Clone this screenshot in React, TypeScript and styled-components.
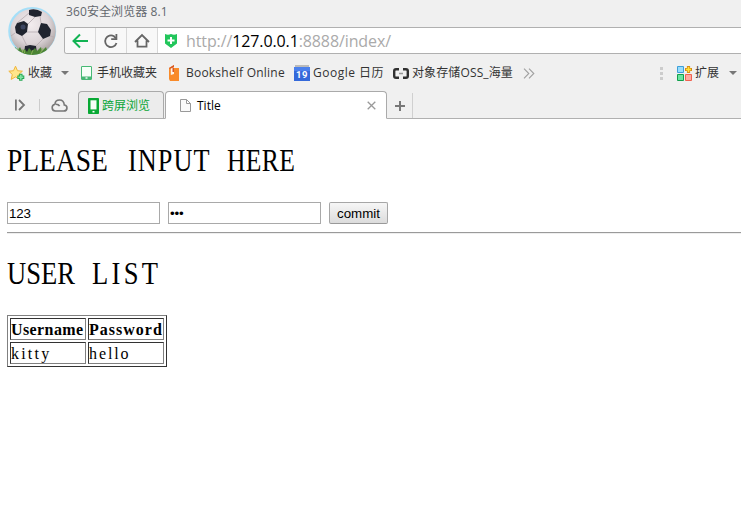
import React from "react";
import styled, { createGlobalStyle } from "styled-components";

const Global = createGlobalStyle`
  * { box-sizing: border-box; }
  html, body, #root { height: 100%; }
  body { margin: 0; background: #fff; overflow: hidden; }
`;

const ui = `"Open Sans", "Noto Sans CJK SC", sans-serif`;

const Window = styled.div`
  width: 741px;
  height: 520px;
  overflow: hidden;
  background: #fff;
`;

const Chrome = styled.header`
  height: 119px;
  background: #f0f0f0;
  font: 12px/16px ${ui};
  color: #333;
  display: flex;
  flex-direction: column;
`;

const TopArea = styled.div`
  display: flex;
  height: 57px;
  padding-left: 7px;
`;

const AvatarBox = styled.div`
  width: 57px;
  padding-top: 6px;
  flex: none;
`;

const TopColumn = styled.div`
  flex: 1;
  min-width: 0;
`;

const AppTitle = styled.div`
  height: 27px;
  padding: 4px 0 0 2px;
  color: #63676d;
  letter-spacing: 0.1px;
  white-space: pre;
`;

const AddressBar = styled.div`
  display: flex;
  height: 27px;
  border: 1px solid #b0b0b0;
  border-right: 0;
  border-radius: 3px 0 0 3px;
  background: #fff;
  overflow: hidden;
`;

const NavButton = styled.div`
  width: 31px;
  background: #f8f8f8;
  border-right: 1px solid #d8d8d8;
  display: flex;
  align-items: center;
  justify-content: center;
`;

const Url = styled.div`
  display: flex;
  align-items: center;
  padding-left: 7px;
  color: #aaa;
  font: 16px/24px "Open Sans", sans-serif;
  letter-spacing: -0.11px;
  white-space: pre;
  svg { margin-right: 9px; }
  b { font-weight: 400; color: #000; }
`;

const Bookmarks = styled.nav`
  display: flex;
  align-items: center;
  height: 32px;
  padding-left: 8px;
`;

const Bookmark = styled.div<{ $w: number; $gap: number; $ls?: number }>`
  display: flex;
  align-items: center;
  gap: ${(p) => p.$gap}px;
  width: ${(p) => p.$w}px;
  flex: none;
  white-space: pre;
  letter-spacing: ${(p) => p.$ls ?? 0}px;
  svg { flex: none; }
`;

const Spacer = styled.div`
  flex: 1;
`;

const TabStrip = styled.div`
  display: flex;
  height: 30px;
  align-items: flex-end;
  background: linear-gradient(#b0b0b0, #b0b0b0) bottom / 100% 1px no-repeat;
`;

const StripTools = styled.div`
  width: 78px;
  height: 28px;
  display: flex;
  align-items: center;
  padding-left: 14px;
`;

const Divider = styled.i`
  width: 1px;
  height: 12px;
  background: #ccc;
  margin: 0 11px 0 13px;
`;

const Tab = styled.div<{ $active?: boolean }>`
  width: ${(p) => (p.$active ? 222 : 86)}px;
  height: 28px;
  margin-right: ${(p) => (p.$active ? 0 : 1)}px;
  padding: 1px ${(p) => (p.$active ? 10 : 8)}px 0 ${(p) => (p.$active ? 14 : 9)}px;
  display: flex;
  align-items: center;
  gap: ${(p) => (p.$active ? 6 : 3)}px;
  border: 1px solid #aaa;
  border-bottom-color: ${(p) => (p.$active ? "#fff" : "#b0b0b0")};
  border-radius: 4px 4px 0 0;
  background: ${(p) => (p.$active ? "#fff" : "#ececec")};
  color: ${(p) => (p.$active ? "#000" : "#0aa637")};
  white-space: nowrap;
  svg { flex: none; }
`;

const NewTab = styled.div`
  width: 26px;
  height: 25px;
  margin-bottom: 1px;
  display: flex;
  align-items: center;
  justify-content: center;
  border-right: 1px solid #d0d0d0;
`;

const Page = styled.main`
  padding: 0 0 0 7px;
  font: 16px/20px "Liberation Serif", serif;
  color: #000;
`;

const Heading = styled.h1<{ $top: number }>`
  margin: 0;
  padding-top: ${(p) => p.$top}px;
  height: ${(p) => p.$top + 38}px;
  display: flex;
  font: 400 32px/38px "Liberation Serif", serif;
  white-space: pre;
`;

const Word = styled.span<{ $w: number; $scale: number; $space?: number }>`
  display: block;
  width: ${(p) => p.$w}px;
  transform: scaleX(${(p) => p.$scale});
  transform-origin: 0 0;
  letter-spacing: ${(p) => p.$space ?? 0}px;
`;

const Form = styled.form`
  display: flex;
  height: 30px;
  margin-top: 23px;
`;

const Field = styled.input`
  width: 153px;
  height: 22px;
  margin-right: 8px;
  padding: 1px 0 0 1px;
  border: 1px solid #a9a9a9;
  border-radius: 0;
  outline: 0;
  background: #fff;
  color: #000;
  font: 13.33px "Liberation Sans", sans-serif;
  letter-spacing: -0.2px;
`;

const Commit = styled.button`
  width: 59px;
  height: 22px;
  padding: 1px 0 0;
  border: 1px solid #a6a6a6;
  border-bottom-color: #999;
  border-radius: 2px;
  background: linear-gradient(#f6f6f6, #dcdcdc);
  color: #000;
  font: 13.33px "Liberation Sans", sans-serif;
`;

const Rule = styled.hr`
  margin: 0;
  height: 2px;
  border: 0;
  border-top: 1px solid #9a9a9a;
  border-bottom: 1px solid #eee;
`;

const Table = styled.table`
  width: 160px;
  margin-top: 23px;
  border: 1px solid;
  border-color: #808080 #333 #333 #808080;
  border-collapse: separate;
  border-spacing: 2px;
  table-layout: fixed;
`;

const Cell = styled.td<{ $space: number }>`
  width: 76px;
  height: 22px;
  padding: 1px 0 0;
  border: 1px solid;
  border-color: #333 #808080 #808080 #333;
  text-align: left;
  line-height: 19px;
  letter-spacing: ${(p) => p.$space}px;
  white-space: nowrap;
`;

const Ball = () => (
  <svg width="50" height="50" viewBox="0 0 50 50">
    <defs>
      <radialGradient id="ball" cx="45%" cy="35%" r="62%">
        <stop offset="0" stopColor="#f2ecee" />
        <stop offset=".65" stopColor="#ddd5d8" />
        <stop offset="1" stopColor="#b0a8a8" />
      </radialGradient>
      <clipPath id="round"><circle cx="25.2" cy="25" r="24" /></clipPath>
    </defs>
    <g clipPath="url(#round)">
      <rect width="50" height="50" fill="#a5dff8" />
      <circle cx="26" cy="25.6" r="22.8" fill="url(#ball)" />
      <g fill="#20242f">
        <path d="M10 17l7-2 4 3-1 8-5 4-6-3-1-6z" />
        <path d="M34 17l6 1 4 6-1 6-7 3-5-7z" />
        <path d="M22 4q7-2 13 2l-1 4-6 1-6-2z" />
        <path d="M18 40l5-1 6 1 1 8H17z" />
      </g>
      <circle cx="16" cy="21" r="2.5" fill="#505c82" opacity=".6" />
      <path d="M21 18l7-7M20 26l11 0M15 30l5 10M8 27l-4 3M34 17l-1-7M36 33l-7 7M43 30l4 1M10 17l12-10" fill="none" stroke="#b4a9ae" strokeWidth=".8" />
      <path d="M4 42l3 2 1-3 3 3 2-3 2 4 3-2 2 3 2-4 3 3 3-3 2 3 4-4 1 4 4-4 1 3 4-3v12H4z" fill="#4b8434" />
      <path d="M9 47l2-5m4 6l1-5m8 6l2-5m7 4l3-6m-18 7l-1-5" stroke="#8fb45c" strokeWidth=".9" />
    </g>
  </svg>
);

const Back = () => (
  <svg width="16" height="16" viewBox="0 0 16 16" fill="none" stroke="#12b354" strokeWidth="2">
    <path d="M1.5 8H16M8 1.5L1.5 8 8 14.5" />
  </svg>
);

const Reload = () => (
  <svg width="16" height="16" viewBox="0 0 16 16" fill="none" stroke="#666" strokeWidth="1.8">
    <path d="M13.5 10A5.8 5.8 0 1 1 11 3.3L13 5.5" />
    <path d="M13.4 1v5.2H8.2" />
  </svg>
);

const Home = () => (
  <svg width="16" height="16" viewBox="0 0 16 16" fill="none" stroke="#666" strokeWidth="1.8">
    <path d="M1 9l7-7 7 7M3.5 7.5v6.2h9V7.5" />
  </svg>
);

const Shield = () => (
  <svg width="12" height="14" viewBox="0 0 12 14">
    <path d="M0 0q3 1.5 6 0 3 1.5 6 0v9.5L6 14 0 9.5z" fill="#22c65b" />
    <path d="M6 3v7M2.5 6.5h7" stroke="#fff" strokeWidth="2" />
  </svg>
);

const Star = () => (
  <svg width="17" height="17" viewBox="0 0 17 17">
    <path d="M7.5 1.2l2 4.5 4.9.5-3.7 3.3 1.1 4.9-4.3-2.5-4.3 2.5 1.1-4.9L.8 6.2l4.7-.5z" fill="#ffe68b" stroke="#f0b63c" strokeLinejoin="round" />
    <path d="M12.8 8.7v7M9.3 12.2h7" stroke="#24a852" strokeWidth="3.4" />
    <path d="M12.8 9.7v5M10.3 12.2h5" stroke="#83e3a5" strokeWidth="1.6" />
  </svg>
);

const Phone = ({ bold = false }: { bold?: boolean }) => (
  <svg width="11" height={bold ? 16 : 14} viewBox="0 0 11 14" preserveAspectRatio="none">
    <rect x=".5" y=".5" width="10" height="13" rx=".4" fill={bold ? "#08a934" : "#47b975"} stroke={bold ? "#08a934" : "#47b975"} />
    <path d={bold ? "M2.5 2h6v8h-6z" : "M1 1h9v9.5H1z"} fill="#f6fff8" />
    <path d="M4.5 12h2" stroke="#fff" strokeWidth="1.4" />
  </svg>
);

const Book = () => (
  <svg width="11" height="16" viewBox="0 0 11 16">
    <path d="M0 3l5-3v3h5v13H1L0 14z" fill="#f98b2a" />
    <path d="M0 3l5-3v2L1 4z" fill="#d85828" />
    <path d="M1.8 3.6L5 2.4V9L1.8 10z" fill="#fff3e6" />
    <path d="M3.5 3h1.5v4H3.5z" fill="#d85828" />
  </svg>
);

const Calendar = () => (
  <svg width="16" height="16" viewBox="0 0 16 16">
    <path d="M1 0h14v4H1z" fill="#bbb" />
    <path d="M0 2h16v14H0z" fill="#3469da" />
    <path d="M0 2h16v4H0z" fill="#4b80ec" />
    <text x="8" y="12.6" textAnchor="middle" fontFamily="Roboto, sans-serif" fontWeight="700" fontSize="9.5" fill="#fff">19</text>
  </svg>
);

const CloudBracket = () => (
  <svg width="16" height="11" viewBox="0 0 16 11" fill="none">
    <path d="M6 1.3H3Q1.2 1.3 1.2 3v5Q1.2 9.7 3 9.7h3M10 1.3h3q1.8 0 1.8 1.7v5q0 1.7-1.8 1.7h-3" stroke="#303030" strokeWidth="2.4" />
    <path d="M6 5.5h4" stroke="#999" strokeWidth="1.5" />
  </svg>
);

const Caret = () => (
  <svg width="8" height="4" viewBox="0 0 8 4"><path d="M0 0h8L4 4z" fill="#777" /></svg>
);

const More = () => (
  <svg width="12" height="11" viewBox="0 0 12 11" fill="none" stroke="#a0a0a0" strokeWidth="1.1">
    <path d="M1 .7l4.8 4.8L1 10.3M6 .7l4.8 4.8L6 10.3" />
  </svg>
);

const Dots = () => (
  <svg width="3" height="13" viewBox="0 0 3 13" fill="#ccc">
    <path d="M0 0h3v3H0zM0 5h3v3H0zM0 10h3v3H0z" />
  </svg>
);

const Extensions = () => (
  <svg width="15" height="15" viewBox="0 0 15 15">
    <path d="M.5.5h6v6h-6z" fill="#98dcfb" stroke="#3d9fd8" />
    <path d="M.5 8.5h6v6h-6z" fill="#6be3a0" stroke="#119f4c" />
    <path d="M8.5 8.5h6v6h-6z" fill="#ffaaa0" stroke="#ef6250" />
    <path d="M11.5 0v7M8 3.5h7" stroke="#d88c16" strokeWidth="3.2" />
    <path d="M11.5 1v5M9 3.5h5" stroke="#ffe438" strokeWidth="1.5" />
  </svg>
);

const Sidebar = () => (
  <svg width="12" height="12" viewBox="0 0 12 12" fill="none" stroke="#777" strokeWidth="1.8">
    <path d="M1.9 .5v11M5 1l5 5-5 5" />
  </svg>
);

const Cloud = () => (
  <svg width="17" height="13" viewBox="0 0 17 13" fill="none" stroke="#777" strokeWidth="1.6">
    <path d="M4.5 12h8.2c4.3 0 4.2-5.7.6-6C13 2.6 10.8 1 8.5 1 6 1 4.1 2.8 4 5.2 0 6 .3 12 4.5 12zM5 5.2c2 0 3 .8 3.6 2" />
  </svg>
);

const Doc = () => (
  <svg width="11" height="13" viewBox="0 0 11 13" fill="#fafafa" stroke="#999">
    <path d="M.5.5h6l4 4v8H.5zM6.5.5v4h4" />
  </svg>
);

const Close = () => (
  <svg width="9" height="9" viewBox="0 0 9 9" stroke="#999" strokeWidth="1.3"><path d="M.7.7l7.6 7.6M8.3.7L.7 8.3" /></svg>
);

const Plus = () => (
  <svg width="10" height="10" viewBox="0 0 10 10" stroke="#777" strokeWidth="2"><path d="M5 0v10M0 5h10" /></svg>
);

export default function App() {
  return (
    <Window>
      <Global />
      <Chrome>
        <TopArea>
          <AvatarBox><Ball /></AvatarBox>
          <TopColumn>
            <AppTitle>360安全浏览器 8.1</AppTitle>
            <AddressBar>
              <NavButton><Back /></NavButton>
              <NavButton><Reload /></NavButton>
              <NavButton><Home /></NavButton>
              <Url><Shield /><span>http://<b>127.0.0.1</b>:8888/index/</span></Url>
            </AddressBar>
          </TopColumn>
        </TopArea>
        <Bookmarks>
          <Bookmark $w={53} $gap={3}><Star />收藏</Bookmark>
          <Bookmark $w={20} $gap={0}><Caret /></Bookmark>
          <Bookmark $w={88} $gap={5}><Phone />手机收藏夹</Bookmark>
          <Bookmark $w={125} $gap={6} $ls={0.22}><Book />Bookshelf Online</Bookmark>
          <Bookmark $w={99} $gap={3} $ls={0.5}><Calendar />Google 日历</Bookmark>
          <Bookmark $w={130} $gap={3} $ls={0.12}><CloudBracket />对象存储OSS_海量</Bookmark>
          <More />
          <Spacer />
          <Bookmark $w={17} $gap={0}><Dots /></Bookmark>
          <Bookmark $w={52} $gap={3}><Extensions />扩展</Bookmark>
          <Bookmark $w={12} $gap={0}><Caret /></Bookmark>
        </Bookmarks>
        <TabStrip>
          <StripTools><Sidebar /><Divider /><Cloud /></StripTools>
          <Tab><Phone bold />跨屏浏览</Tab>
          <Tab $active><Doc />Title<Spacer /><Close /></Tab>
          <NewTab><Plus /></NewTab>
        </TabStrip>
      </Chrome>
      <Page>
        <Heading $top={22}>
          <Word $w={121} $scale={0.86}>PLEASE</Word>
          <Word $w={99} $scale={0.82} $space={1.3}>INPUT</Word>
          <Word $w={68} $scale={0.8} $space={0.4}>HERE</Word>
        </Heading>
        <Form>
          <Field type="text" defaultValue="123" />
          <Field type="password" defaultValue="123" />
          <Commit type="button">commit</Commit>
        </Form>
        <Rule />
        <Heading $top={20}>
          <Word $w={85} $scale={0.83}>USER</Word>
          <Word $w={68} $scale={0.83} $space={4}>LIST</Word>
        </Heading>
        <Table>
          <tbody>
            <tr>
              <Cell as="th" $space={0.4}>Username</Cell>
              <Cell as="th" $space={1}>Password</Cell>
            </tr>
            <tr>
              <Cell $space={2.2}>kitty</Cell>
              <Cell $space={1.9}>hello</Cell>
            </tr>
          </tbody>
        </Table>
      </Page>
    </Window>
  );
}
